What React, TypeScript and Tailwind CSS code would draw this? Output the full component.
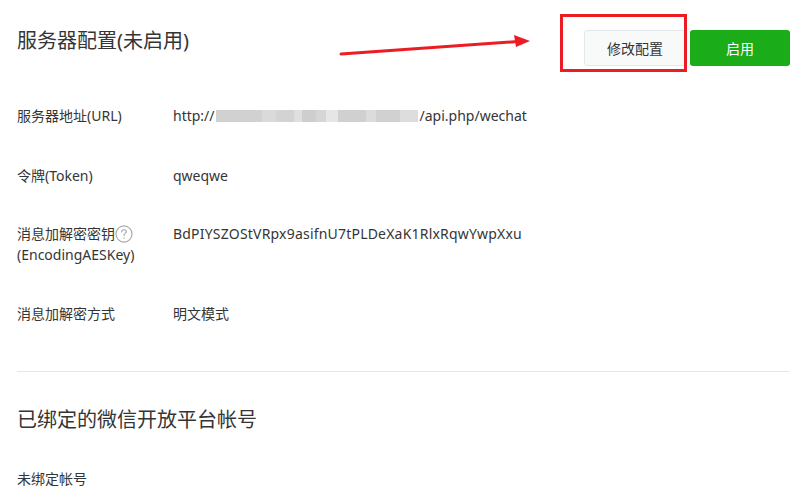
import React from "react";

const FONT = '"Noto Sans", "Noto Sans CJK SC", sans-serif';

// Masked-out host part of the server URL, rendered as grey blocks
const maskSegments: { w: number; c: string }[] = [
  { w: 46, c: "#cdcdcd" },
  { w: 14, c: "#d6d6d6" },
  { w: 18, c: "#cfcfcf" },
  { w: 8, c: "#dcdcdc" },
  { w: 14, c: "#c9c9c9" },
  { w: 10, c: "#d2d2d2" },
  { w: 12, c: "#e4e4e4" },
  { w: 28, c: "#cbcbcb" },
  { w: 10, c: "#d9d9d9" },
  { w: 24, c: "#cdcdcd" },
  { w: 18, c: "#dadada" },
];

function HelpIcon() {
  return (
    <svg width="18" height="18" viewBox="0 0 17 17" className="inline-block align-[-4px]">
      <circle cx="8.5" cy="8.5" r="7.6" fill="none" stroke="#a8a8a8" strokeWidth="1.1" />
      <path
        d="M6.3 6.6c0-1.3 1-2.1 2.2-2.1s2.2.8 2.2 1.9c0 1.3-1.6 1.5-2.1 2.6v.8"
        fill="none"
        stroke="#a8a8a8"
        strokeWidth="1.1"
        strokeLinecap="round"
      />
      <circle cx="8.6" cy="12.3" r="0.7" fill="#a8a8a8" />
    </svg>
  );
}

function Row({ label, children, className }: { label: React.ReactNode; children: React.ReactNode; className: string }) {
  return (
    <div className={`flex text-[14px] leading-[21px] text-[#353535] ${className}`}>
      <div className="w-[156px] shrink-0">{label}</div>
      <div>{children}</div>
    </div>
  );
}

export default function App() {
  return (
    <div
      className="relative w-[793px] h-[494px] overflow-hidden bg-white pl-[17px] pr-[3px]"
      style={{ fontFamily: FONT }}
    >
      {/* header */}
      <div className="flex items-start justify-between pt-[29px]">
        <h2 className="text-[20px] leading-[24px] text-[#353535] font-normal">服务器配置(未启用)</h2>
        <div className="flex gap-[4px] pt-[1px]">
          <button className="w-[102px] h-[36px] rounded-[3px] border border-[#e4e8eb] bg-[#f8f9f9] text-[14px] text-[#353535]">
            修改配置
          </button>
          <button className="w-[100px] h-[36px] rounded-[3px] bg-[#1aad19] text-[14px] text-white">启用</button>
        </div>
      </div>

      <Row label="服务器地址(URL)" className="mt-[39px]">
        <span className="inline-flex items-center">
          http://
          <span className="inline-flex h-[12px] ml-[1px] mr-[2px] opacity-90 blur-[0.4px]">
            {maskSegments.map((s, i) => (
              <span key={i} className="block h-full" style={{ width: s.w, backgroundColor: s.c }} />
            ))}
          </span>
          /api.php/wechat
        </span>
      </Row>

      <Row label="令牌(Token)" className="mt-[39px]">
        qweqwe
      </Row>

      <Row
        label={
          <>
            消息加解密密钥
            <HelpIcon />
            <br />
            (EncodingAESKey)
          </>
        }
        className="mt-[37px]"
      >
        <span className="tracking-[0.2px]">BdPIYSZOStVRpx9asifnU7tPLDeXaK1RlxRqwYwpXxu</span>
      </Row>

      <Row label="消息加解密方式" className="mt-[38px]">
        明文模式
      </Row>

      <div className="mt-[47px] h-px bg-[#e7e7eb]" />

      <h2 className="mt-[36px] text-[20px] leading-[24px] text-[#353535] font-normal">已绑定的微信开放平台帐号</h2>

      <div className="mt-[36px] text-[14px] leading-[21px] text-[#353535]">未绑定帐号</div>

      {/* annotation: red highlight box */}
      <div className="absolute left-[560px] top-[14px] w-[127px] h-[58px] border-[3px] border-[#ec1c24]" />

      {/* annotation: red arrow */}
      <svg className="absolute left-[336px] top-[32px]" width="200" height="28" viewBox="0 0 200 28">
        <line x1="5" y1="22" x2="182" y2="9.5" stroke="#ec1c24" strokeWidth="3" strokeLinecap="round" />
        <polygon points="194,9 178,3 180,15" fill="#ec1c24" />
      </svg>
    </div>
  );
}
